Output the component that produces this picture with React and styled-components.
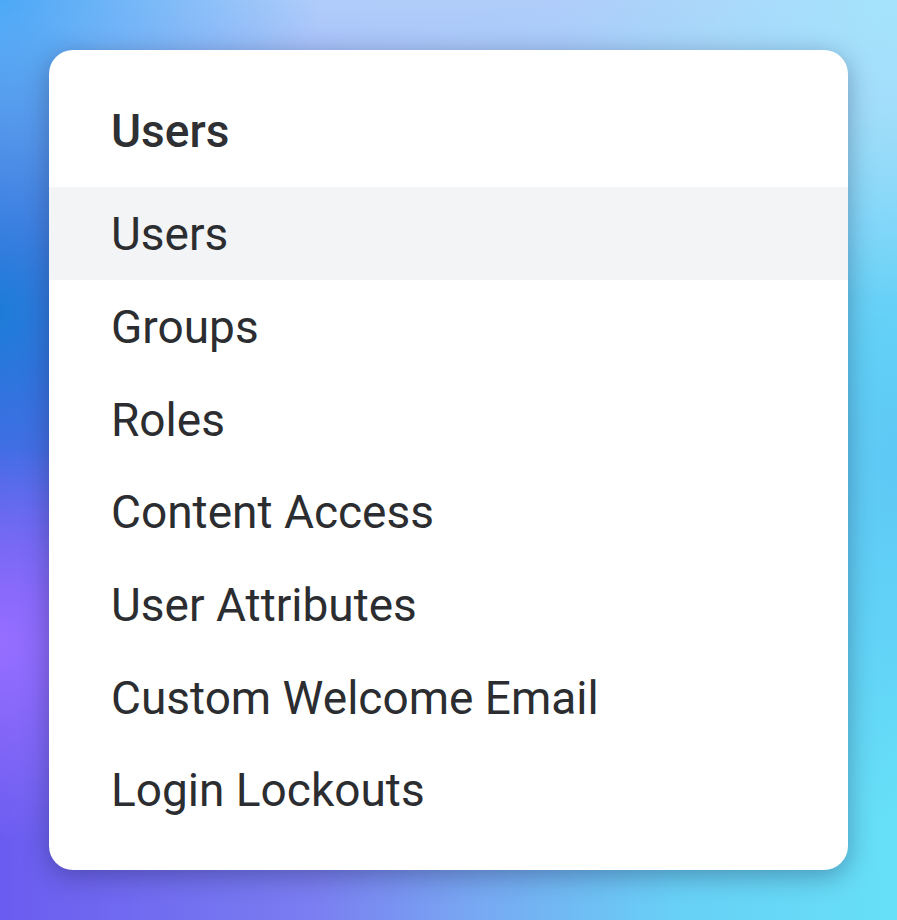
import styled, { createGlobalStyle } from 'styled-components';

const GlobalStyle = createGlobalStyle`
  html, body {
    margin: 0;
    padding: 0;
  }
  body {
    font-family: Roboto, "Liberation Sans", Arial, sans-serif;
  }
`;

const Page = styled.div`
  width: 897px;
  height: 920px;
  box-sizing: border-box;
  padding: 50px 49px;
  background:
    radial-gradient(ellipse 200px 200px at 0% 70%, rgba(150, 110, 255, 1) 0%, rgba(150, 110, 255, 0) 100%),
    radial-gradient(ellipse 220px 300px at 0% 34%, rgba(28, 124, 216, 1) 0%, rgba(28, 124, 216, 0) 100%),
    radial-gradient(ellipse 320px 240px at 0% 0%, rgba(76, 168, 246, 1) 0%, rgba(76, 168, 246, 0) 100%),
    radial-gradient(ellipse 340px 300px at 100% 0%, rgba(164, 228, 251, 1) 0%, rgba(164, 228, 251, 0) 100%),
    radial-gradient(ellipse 200px 360px at 100% 50%, rgba(94, 200, 245, 1) 0%, rgba(94, 200, 245, 0) 100%),
    linear-gradient(to bottom, #b0cdfa 0%, rgba(176, 205, 250, 0) 40%),
    linear-gradient(to right, #6a5cf0 0%, #7a7ef1 35%, #78a6f2 52%, #68d0f6 75%, #66e0f8 100%);
`;

const Card = styled.div`
  width: 799px;
  height: 820px;
  box-sizing: border-box;
  background: #ffffff;
  border-radius: 24px;
  box-shadow: 0 6px 26px rgba(20, 24, 60, 0.35);
  overflow: hidden;
  display: flex;
  flex-direction: column;
`;

const Header = styled.div`
  height: 137px;
  box-sizing: border-box;
  padding: 24px 0 0 62px;
  display: flex;
  align-items: center;
  font-size: 46px;
  font-weight: 500;
  color: #2e3033;
`;

const Item = styled.div`
  height: 92.7px;
  box-sizing: border-box;
  padding: 2px 0 0 62px;
  display: flex;
  align-items: center;
  font-size: 46px;
  font-weight: 400;
  color: #2b2d30;
  background: ${(props) => (props.active ? '#f3f4f6' : 'transparent')};
`;

const items = [
  'Users',
  'Groups',
  'Roles',
  'Content Access',
  'User Attributes',
  'Custom Welcome Email',
  'Login Lockouts',
];

const App = () => {
  return (
    <Page>
      <GlobalStyle />
      <Card>
        <Header>Users</Header>
        {items.map((label, i) => (
          <Item key={label} active={i === 0}>
            {label}
          </Item>
        ))}
      </Card>
    </Page>
  );
};

export default App;
